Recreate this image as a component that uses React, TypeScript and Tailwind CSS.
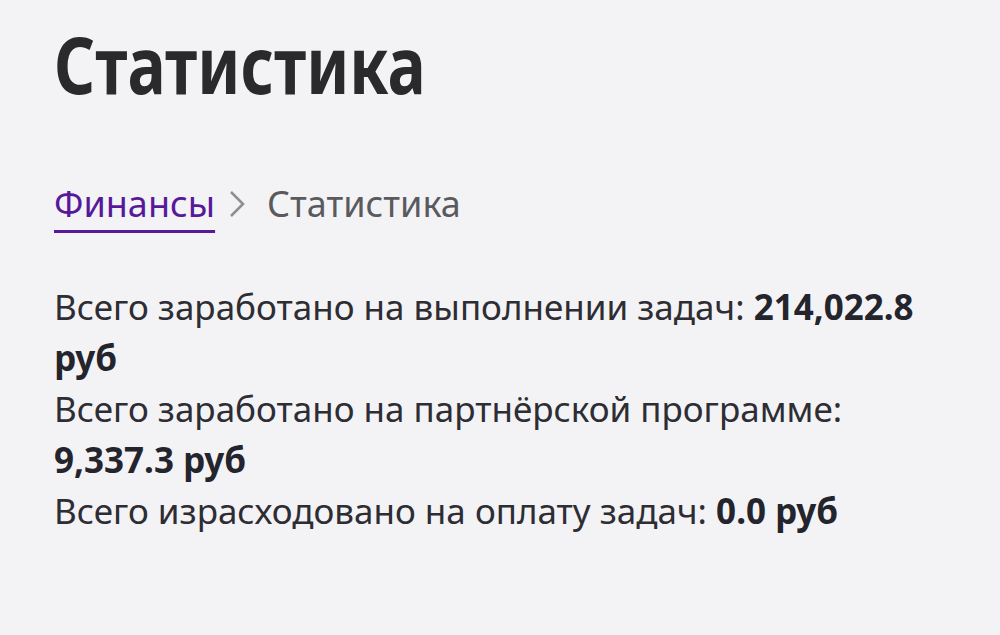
import React from "react";

const stats = [
  { label: "Всего заработано на выполнении задач:", value: "214,022.8 руб" },
  { label: "Всего заработано на партнёрской программе:", value: "9,337.3 руб" },
  { label: "Всего израсходовано на оплату задач:", value: "0.0 руб" },
];

const App: React.FC = () => {
  return (
    <div
      className="min-h-[635px] w-[1000px] bg-[#f3f3f6] px-[54px] pt-[19px] text-[#2d2d33]"
      style={{ fontFamily: "'Noto Sans', 'Open Sans', sans-serif" }}
    >
      <h1 className="origin-left scale-x-[0.82] text-[78px] font-bold leading-[90px] text-[#2a2a2d]">
        Статистика
      </h1>

      <nav className="mt-[70px] flex items-center text-[36px] leading-[50px]">
        <a href="#" className="text-[#57199a] underline decoration-[3px] underline-offset-[13px]">
          Финансы
        </a>
        <svg viewBox="0 0 16 28" className="ml-[14px] mr-[22px] h-[28px] w-[16px]" fill="none" stroke="#8e8e93" strokeWidth="2.6">
          <path d="M2 2l12 12L2 26" />
        </svg>
        <span className="text-[#59595e]">Статистика</span>
      </nav>

      <div className="mt-[52px] w-[880px] text-[35px] leading-[51px]">
        {stats.map((s) => (
          <p key={s.label}>
            {s.label} <b className="font-bold text-[#24242c]">{s.value}</b>
          </p>
        ))}
      </div>
    </div>
  );
};

export default App;
